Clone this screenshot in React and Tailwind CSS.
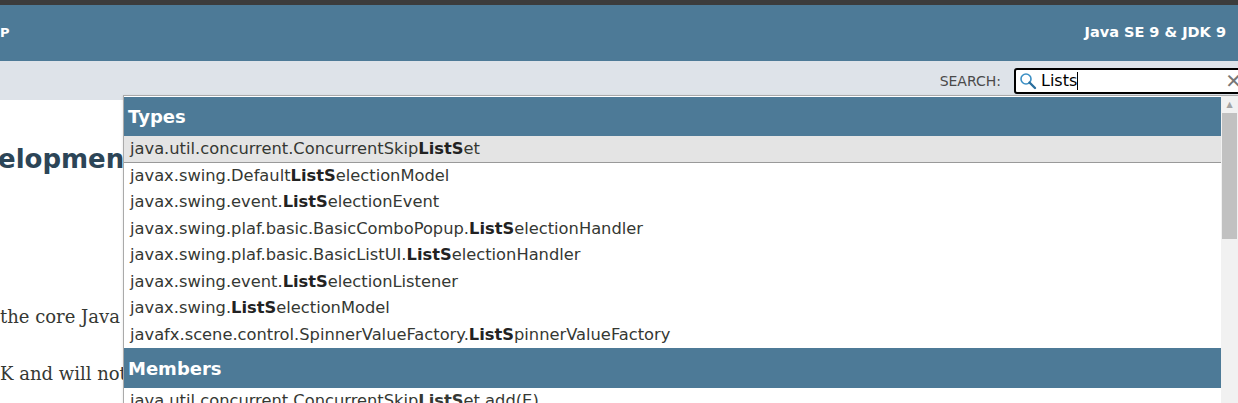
export default function App() {
  const rows = [
    ["java.util.concurrent.ConcurrentSkip", "ListS", "et"],
    ["javax.swing.Default", "ListS", "electionModel"],
    ["javax.swing.event.", "ListS", "electionEvent"],
    ["javax.swing.plaf.basic.BasicComboPopup.", "ListS", "electionHandler"],
    ["javax.swing.plaf.basic.BasicListUI.", "ListS", "electionHandler"],
    ["javax.swing.event.", "ListS", "electionListener"],
    ["javax.swing.", "ListS", "electionModel"],
    ["javafx.scene.control.SpinnerValueFactory.", "ListS", "pinnerValueFactory"],
  ];
  const sans = { fontFamily: '"DejaVu Sans", sans-serif' };
  const serif = { fontFamily: '"DejaVu Serif", serif' };
  return (
    <div className="relative w-[1238px] h-[403px] overflow-hidden bg-white" style={sans}>
      <div className="h-[5px] bg-[#3c3c3c]" />
      <div className="h-[56px] bg-[#4d7a97] flex items-center justify-between text-white font-bold">
        <span className="text-[13px]">P</span>
        <span className="mr-[12px] text-[14.5px]">Java SE 9 &amp; JDK 9</span>
      </div>
      <div className="h-[39px] bg-[#dee3e9] flex items-center justify-end pt-[1px]">
        <span className="text-[14px] text-[#4a4a4a] mr-[13px]">SEARCH:</span>
        <div className="w-[234px] h-[26px] bg-white border-2 border-black rounded-[3px] flex items-center pl-[3px] -mr-[10px]">
          <svg width="18" height="18" viewBox="0 0 18 18">
            <circle cx="7" cy="7" r="5" fill="none" stroke="#3b8fc4" strokeWidth="1.6" />
            <line x1="10.5" y1="10.5" x2="16" y2="16" stroke="#2a6f9e" strokeWidth="2.4" strokeLinecap="round" />
          </svg>
          <span className="ml-[4px] text-[16px] text-black">Lists</span>
          <span className="w-[1px] h-[18px] bg-black" />
          <span className="ml-auto text-[#777] text-[20px] font-bold leading-none mr-[4px]">✕</span>
        </div>
      </div>
      <div>
        <h1 className="text-[26px] font-bold text-[#2c4557] mt-[40px] -ml-[2px] whitespace-nowrap">elopment</h1>
        <p className="mt-[124px] text-[18px] text-[#353833] whitespace-nowrap" style={serif}>the core Java platform</p>
        <p className="mt-[30px] text-[18px] text-[#353833] whitespace-nowrap" style={serif}>K and will not</p>
      </div>
      <div className="absolute left-[123px] top-[95px] w-[1115px] h-[320px] bg-white border-l border-t border-[#aaa] flex shadow">
        <div className="flex-1 pt-[1px]">
          <div className="h-[39px] bg-[#4d7a97] text-white font-bold text-[18px] flex items-center pl-[4px]">Types</div>
          {rows.map((r, i) => (
            <div key={i} className={`h-[26.5px] flex items-center pl-[6px] text-[16.3px] text-[#353833] whitespace-nowrap ${i === 0 ? "bg-[#e4e4e4] border-b border-[#999]" : ""}`}>
              {r[0]}<b className="text-[#222]">{r[1]}</b>{r[2]}
            </div>
          ))}
          <div className="h-[40px] bg-[#4d7a97] text-white font-bold text-[18px] flex items-center pl-[4px]">Members</div>
          <div className="h-[26px] flex items-center pl-[6px] text-[16.3px] text-[#353833] whitespace-nowrap">
            java.util.concurrent.ConcurrentSkip<b>ListS</b>et.add(E)
          </div>
        </div>
        <div className="w-[17px] bg-[#f1f1f1] flex flex-col items-center">
          <div className="h-[17px] flex items-center justify-center text-[8px] text-[#a3a3a3]">▲</div>
          <div className="w-[15px] h-[126px] bg-[#c1c1c1]" />
        </div>
      </div>
    </div>
  );
}
